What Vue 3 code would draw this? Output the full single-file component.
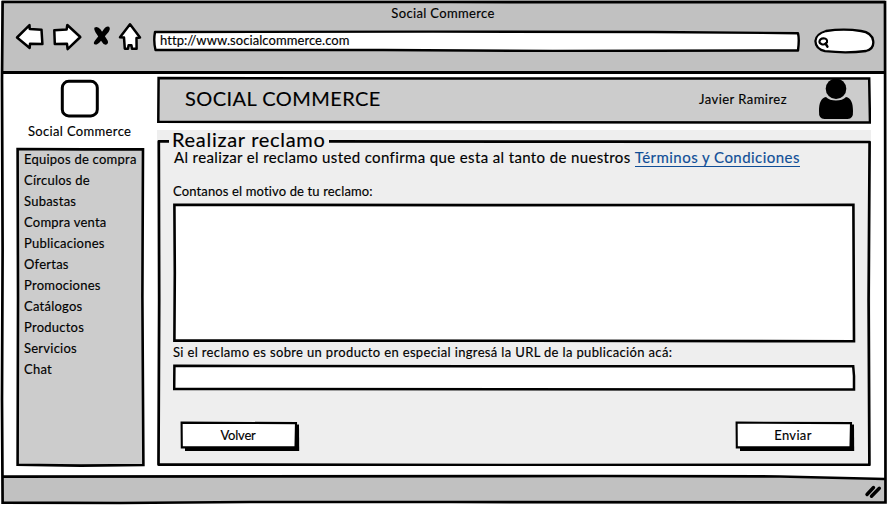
<script setup>
const menu = [
  'Equipos de compra',
  'Círculos de',
  'Subastas',
  'Compra venta',
  'Publicaciones',
  'Ofertas',
  'Promociones',
  'Catálogos',
  'Productos',
  'Servicios',
  'Chat',
]
</script>

<template>
  <div class="window">
    <header class="chrome">
      <div class="window-title">Social Commerce</div>
      <div class="toolbar">
        <svg class="nav-icons" width="130" height="34" viewBox="14 20 130 34">
          <g fill="#fff" stroke="#000" stroke-width="2.5" stroke-linejoin="round" stroke-linecap="round">
            <path d="M17 37.5 L29.5 25.2 L29.7 29 L41.5 29.7 L42.4 44 L30 43.8 L29.7 48 Z" />
            <path d="M80.3 37 L67.3 25 L66.6 29.6 L54.3 30.3 L54.8 44 L67 43.8 L67.6 49.2 Z" />
            <path d="M130 24.2 L120 37.2 L124 37.6 L124.8 48.7 L128 48.7 L128.6 45.3 L131.4 45.3 L132 48.7 L136.6 48.7 L136.5 38 L140 37.4 Z" />
          </g>
          <g>
            <path d="M94.6 27.6 Q97.6 25.6 100.6 29.6 L107.6 40.6 Q109 43.6 106 44.8 Q103.6 45.2 101.6 41.6 L95.6 32.4 Q93.6 29 94.6 27.6Z" />
            <path d="M109 26.8 Q106 25.6 102.6 31 L95 40.6 Q92.6 43.6 95 44.6 Q98 44.8 101.4 40.2 L108.6 32 Q110.8 28.6 109 26.8Z" />
          </g>
        </svg>
        <div class="address">
          <svg class="frame" viewBox="0 0 647 22" preserveAspectRatio="none">
            <path d="M2 2 L280 1.6 L500 2 L645 3.2 Q646.5 9 645 20.5 L400 21 L230 20 L2.5 20 Q.3 11 2 2Z" fill="#fff" stroke="#000" stroke-width="2.4" stroke-linejoin="round" />
          </svg>
          <span class="address-text">http://www.socialcommerce.com</span>
        </div>
        <svg class="search" width="62" height="28" viewBox="813 27 62 28">
          <path d="M826 31 Q844 28.3 861 31 Q872 32.5 873.2 41 Q874.2 49 866 51 Q847 53.6 825 51.2 Q815.6 49 815.4 41 Q815.8 34 826 31Z" fill="#fff" stroke="#000" stroke-width="2.3" />
          <path d="M819.4 41.6 Q819.8 38.4 823.6 38.2 Q827.6 38.6 827 42.2 Q825.6 45 822.2 44.4 Q819.4 43.8 819.4 41.6Z" fill="none" stroke="#000" stroke-width="2.1" />
          <path d="M825.6 43.6 L827.4 46.6" stroke="#000" stroke-width="2.5" stroke-linecap="round" />
        </svg>
      </div>
    </header>

    <div class="body">
      <aside class="side">
        <svg class="logo" width="40" height="40" viewBox="0 0 40 40">
          <rect x="2.3" y="2.3" width="35" height="34.6" rx="6.5" fill="#fff" stroke="#000" stroke-width="3" />
        </svg>
        <div class="brand">Social Commerce</div>
        <nav class="menu">
          <svg class="frame" viewBox="0 0 129 320" preserveAspectRatio="none">
            <path d="M1.6 2 L70 2.4 L127 2.2 L126.4 150 L127.4 318 L65 318.6 L1.6 317.8 L2 150Z" fill="#ccc" stroke="#000" stroke-width="2.6" />
          </svg>
          <a v-for="item in menu" :key="item" class="menu-item">{{ item }}</a>
        </nav>
      </aside>

      <main class="main">
        <div class="topbar">
          <svg class="frame" viewBox="0 0 714 48" preserveAspectRatio="none">
            <path d="M1.6 2 L300 2.4 L712.2 2.5 L713 46.6 L360 46.2 L1.3 45.8Z" fill="#ccc" stroke="#000" stroke-width="2.5" />
          </svg>
          <h1 class="site-name">SOCIAL COMMERCE</h1>
          <span class="user">Javier Ramirez</span>
          <svg class="avatar" width="36" height="42" viewBox="0 0 36 42">
            <circle cx="18" cy="10.7" r="10.3" />
            <path d="M8 19 C12 23.8 24 23.8 28 19 C33 20 35 25 35 33 Q35.5 41 29.5 41 H6.5 Q.5 41 1 33 C1 25 3 20 8 19Z" />
          </svg>
        </div>

        <section class="panel">
          <svg class="frame" viewBox="0 0 714 336" preserveAspectRatio="none">
            <path d="M12 11.4 L1.8 11.4 L2.2 170 L1.5 334.6 L350 335 L712.4 334.8 L711.6 170 L712.6 12 L450 11.6 L172 11.4" fill="none" stroke="#000" stroke-width="2.7" stroke-linejoin="round" />
          </svg>
          <h2 class="legend">Realizar reclamo</h2>
          <p class="intro">Al realizar el reclamo usted confirma que esta al tanto de nuestros <a class="link">Términos y Condiciones</a></p>
          <p class="label reason">Contanos el motivo de tu reclamo:</p>
          <div class="textarea">
            <svg class="frame" viewBox="0 0 683 140" preserveAspectRatio="none">
              <path d="M1.4 1.8 L300 2.1 L680.4 1.9 L681 138.2 L360 137.8 L1.4 137.6 L1.8 70Z" fill="#fff" stroke="#000" stroke-width="2.6" />
            </svg>
          </div>
          <p class="label product">Si el reclamo es sobre un producto en especial ingresá la URL de la publicación acá:</p>
          <div class="input">
            <svg class="frame" viewBox="0 0 683 27" preserveAspectRatio="none">
              <path d="M1.4 1.8 L300 2.2 L680.2 2.2 L681 12 L681 25.6 L340 25.3 L1.2 24.9Z" fill="#fff" stroke="#000" stroke-width="2.5" />
            </svg>
          </div>
          <div class="actions">
            <div class="button back">
              <svg class="frame" viewBox="0 0 120 31" preserveAspectRatio="none">
                <path d="M5 5 L119 3.6 L119.2 30 L5 30Z" />
                <path d="M1.6 1.6 L116 2.1 L115.5 26.2 L1.8 26.4Z" fill="#fff" stroke="#000" stroke-width="2.1" />
              </svg>
              <span class="button-text">Volver</span>
            </div>
            <div class="button send">
              <svg class="frame" viewBox="0 0 120 31" preserveAspectRatio="none">
                <path d="M5 5 L119 3.6 L119.2 30 L5 30Z" />
                <path d="M1.6 1.6 L116 2.1 L115.5 26.2 L1.8 26.4Z" fill="#fff" stroke="#000" stroke-width="2.1" />
              </svg>
              <span class="button-text">Enviar</span>
            </div>
          </div>
        </section>
      </main>
    </div>

    <footer class="status">
      <svg class="frame" viewBox="0 0 887 30" preserveAspectRatio="none">
        <path d="M2 2 L600 2 L760 2.3 L885 5 V28 H2Z" fill="#c1c1c1" />
        <path d="M2 2.6 L600 2 L780 2.5 L885 5" fill="none" stroke="#000" stroke-width="2.7" />
        <g stroke="#000" stroke-width="3.4" stroke-linecap="round">
          <path d="M867 20.5 L873.5 13.5" />
          <path d="M871.5 22.2 L879.3 14.2" />
        </g>
      </svg>
    </footer>

    <svg class="outline" viewBox="0 0 887 505">
      <path d="M2.6 2 L450 2 L885 2.2 L885.3 250 L885.5 502.5 L450 502 L250 502 L120 503 L2.6 502.6 L2 400 L2.6 250 L2 80Z" fill="none" stroke="#000" stroke-width="2.7" />
    </svg>
  </div>
</template>

<style>
body {
  margin: 0;
  background: #fff;
}
</style>

<style scoped>
.window {
  position: relative;
  display: flex;
  flex-direction: column;
  width: 887px;
  height: 505px;
  box-sizing: border-box;
  overflow: hidden;
  background: #fff;
  color: #000;
  font-family: Lato, "Open Sans", sans-serif;
  font-size: 13px;
  line-height: 21px;
  letter-spacing: 0.34px;
  -webkit-text-stroke: 0.15px currentColor;
}
h1, h2, p {
  margin: 0;
  font-weight: 400;
}
.frame {
  position: absolute;
  inset: 0;
  width: 100%;
  height: 100%;
}
.outline {
  position: absolute;
  inset: 0;
  width: 887px;
  height: 505px;
  pointer-events: none;
}
.chrome {
  height: 74px;
  box-sizing: border-box;
  margin: 0 2px;
  padding-top: 3px;
  border-bottom: 3px solid #000;
  background: #c1c1c1;
}
.window-title {
  height: 17px;
  padding-right: 1px;
  text-align: center;
}
.toolbar {
  display: flex;
  align-items: flex-start;
  padding-left: 12px;
}
.nav-icons {
  flex: none;
}
.address {
  position: relative;
  width: 647px;
  height: 22px;
  margin: 10px 0 0 9px;
}
.address-text {
  position: relative;
  display: block;
  padding-left: 7px;
  line-height: 21px;
  letter-spacing: 0.07px;
}
.search {
  margin: 7px 0 0 13px;
}
.body {
  display: flex;
  height: 400px;
}
.side {
  width: 129px;
  margin-left: 16px;
  padding-top: 5px;
}
.logo {
  display: block;
  margin: 0 auto 0 44px;
}
.brand {
  height: 28px;
  padding: 2px 0 0 12px;
  box-sizing: border-box;
}
.menu {
  position: relative;
  height: 320px;
  box-sizing: border-box;
  padding: 2px 0 0 8px;
}
.menu-item {
  position: relative;
  display: block;
  height: 21px;
  white-space: nowrap;
  letter-spacing: 0.24px;
}
.main {
  width: 714px;
  margin-left: 12px;
  padding-top: 2px;
}
.topbar {
  position: relative;
  display: flex;
  align-items: center;
  height: 48px;
}
.site-name {
  position: relative;
  flex: 1;
  padding: 0 0 3px 28px;
  font-size: 20px;
  letter-spacing: 0.44px;
}
.user {
  position: relative;
  margin-right: 31px;
  padding-bottom: 2px;
  letter-spacing: 0.46px;
}
.avatar {
  position: relative;
  margin: -2px 17px 0 0;
}
.panel {
  position: relative;
  height: 336px;
  margin-top: 6px;
  padding-left: 16px;
  box-sizing: border-box;
  background: #eee;
}
.legend {
  position: relative;
  height: 18px;
  margin-left: -1px;
  font-size: 20px;
  line-height: 18px;
  letter-spacing: 0.7px;
}
.intro {
  position: relative;
  height: 20px;
  padding-left: 1px;
  font-size: 15px;
  line-height: 18px;
  letter-spacing: 0.37px;
  white-space: nowrap;
}
.link {
  color: #104e97;
  border-bottom: 1px solid #104e97;
  letter-spacing: 0.45px;
}
.label {
  position: relative;
  white-space: nowrap;
}
.reason {
  padding-top: 13px;
  height: 22px;
  letter-spacing: 0.14px;
}
.textarea {
  position: relative;
  width: 683px;
  height: 140px;
}
.product {
  height: 21px;
  line-height: 19px;
  letter-spacing: 0.35px;
}
.input {
  position: relative;
  width: 683px;
  height: 27px;
}
.actions {
  display: flex;
  justify-content: space-between;
  width: 675px;
  padding: 30px 0 0 7px;
}
.button {
  position: relative;
  width: 120px;
  height: 31px;
  text-align: center;
}
.button-text {
  position: relative;
  display: block;
  padding: 4px 4px 0 0;
}
.back .button-text {
  letter-spacing: -0.2px;
}
.status {
  position: relative;
  height: 30px;
}
</style>
